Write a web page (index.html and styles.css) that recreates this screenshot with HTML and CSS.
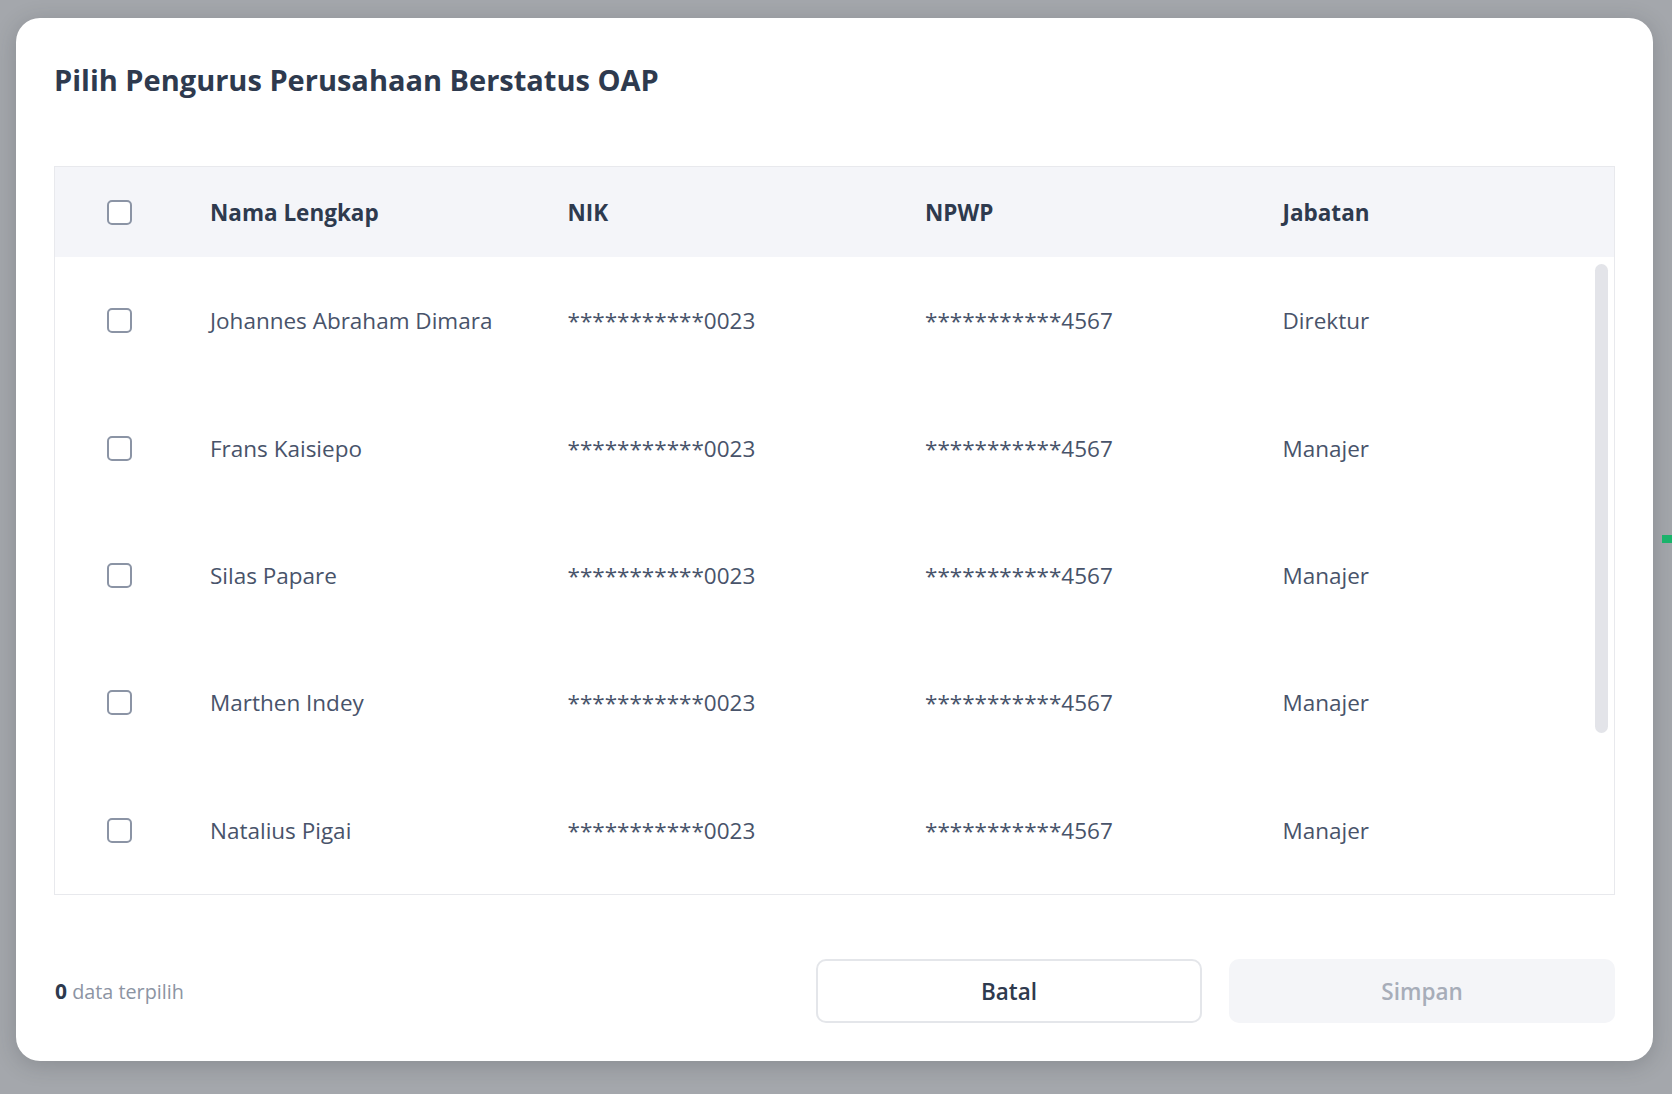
FILE: index.html
```html
<!DOCTYPE html>
<html lang="id">
<head>
    <meta charset="UTF-8">
    <meta name="viewport" content="width=device-width, initial-scale=1.0">
    <title>Pilih Pengurus Perusahaan Berstatus OAP</title>
    <link rel="stylesheet" href="styles.css">
</head>
<body>
    <span class="page-peek"></span>

    <div class="modal">
        <h1 class="modal-title">Pilih Pengurus Perusahaan Berstatus OAP</h1>

        <div class="table">
            <div class="row head">
                <div class="cell check"><span class="checkbox"></span></div>
                <div class="cell">Nama Lengkap</div>
                <div class="cell">NIK</div>
                <div class="cell">NPWP</div>
                <div class="cell">Jabatan</div>
            </div>

            <div class="table-body">
                <div class="row">
                    <div class="cell check"><span class="checkbox"></span></div>
                    <div class="cell">Johannes Abraham Dimara</div>
                    <div class="cell">***********0023</div>
                    <div class="cell">***********4567</div>
                    <div class="cell">Direktur</div>
                </div>
                <div class="row">
                    <div class="cell check"><span class="checkbox"></span></div>
                    <div class="cell">Frans Kaisiepo</div>
                    <div class="cell">***********0023</div>
                    <div class="cell">***********4567</div>
                    <div class="cell">Manajer</div>
                </div>
                <div class="row">
                    <div class="cell check"><span class="checkbox"></span></div>
                    <div class="cell">Silas Papare</div>
                    <div class="cell">***********0023</div>
                    <div class="cell">***********4567</div>
                    <div class="cell">Manajer</div>
                </div>
                <div class="row">
                    <div class="cell check"><span class="checkbox"></span></div>
                    <div class="cell">Marthen Indey</div>
                    <div class="cell">***********0023</div>
                    <div class="cell">***********4567</div>
                    <div class="cell">Manajer</div>
                </div>
                <div class="row">
                    <div class="cell check"><span class="checkbox"></span></div>
                    <div class="cell">Natalius Pigai</div>
                    <div class="cell">***********0023</div>
                    <div class="cell">***********4567</div>
                    <div class="cell">Manajer</div>
                </div>

                <span class="scroll-thumb"></span>
            </div>
        </div>

        <div class="modal-footer">
            <p class="selected"><b>0</b> data terpilih</p>
            <div class="actions">
                <button class="btn btn-outline">Batal</button>
                <button class="btn btn-disabled" disabled>Simpan</button>
            </div>
        </div>
    </div>
</body>
</html>
```

FILE: styles.css
```css
body {
    font-family: "Open Sans", "Noto Sans", Arial, sans-serif;
    margin: 0;
    padding: 18px 0 0 16px;
    min-height: 100vh;
    box-sizing: border-box;
    background-color: #a4a7ac;
    overflow: hidden;
}

.page-peek {
    position: absolute;
    left: 1662px;
    top: 535px;
    width: 10px;
    height: 8px;
    background: #1bb36b;
}

.modal {
    width: 1637px;
    box-sizing: border-box;
    padding: 42px 38px 38px 38px;
    background: #fff;
    border-radius: 24px;
    box-shadow: 0 4px 22px rgba(40, 44, 52, 0.22);
}

.modal-title {
    margin: 0 0 66px 0;
    font-size: 29px;
    line-height: 40px;
    font-weight: 700;
    color: #2e3a4e;
}

.table {
    border: 1px solid #e8e9ed;
}

.row {
    display: grid;
    grid-template-columns: 155px 357.5px 357.5px 357.5px 1fr;
    align-items: center;
    height: 127.4px;
    font-size: 22.5px;
    color: #48536a;
}

.row.head {
    height: 90px;
    background: #f4f5f9;
    font-weight: 700;
    color: #2e3a4e;
}

.cell {
    white-space: nowrap;
}

.cell.check {
    display: flex;
    padding-left: 52px;
}

.checkbox {
    display: block;
    width: 25px;
    height: 25px;
    box-sizing: border-box;
    border: 2px solid #8b94a5;
    border-radius: 5px;
    background: #fff;
}

.table-body {
    position: relative;
    height: 637px;
    overflow: hidden;
}

.scroll-thumb {
    position: absolute;
    top: 7px;
    right: 6px;
    width: 13px;
    height: 469px;
    border-radius: 7px;
    background: #e3e4e9;
}

.modal-footer {
    display: flex;
    justify-content: space-between;
    align-items: center;
    margin-top: 64px;
}

.selected {
    margin: 0 0 0 1px;
    font-size: 19.8px;
    color: #8c94a3;
}

.selected b {
    color: #2e3a4e;
    font-weight: 700;
    font-size: 21px;
}

.actions {
    display: flex;
    gap: 27px;
}

.btn {
    width: 386px;
    height: 64px;
    border-radius: 10px;
    font-family: inherit;
    font-size: 22.5px;
    font-weight: 600;
    cursor: pointer;
}

.btn-outline {
    background: #fff;
    border: 2px solid #e4e6ea;
    color: #2e3a4e;
}

.btn-disabled {
    background: #f4f5f8;
    border: none;
    color: #a7adb9;
    cursor: default;
}
```
